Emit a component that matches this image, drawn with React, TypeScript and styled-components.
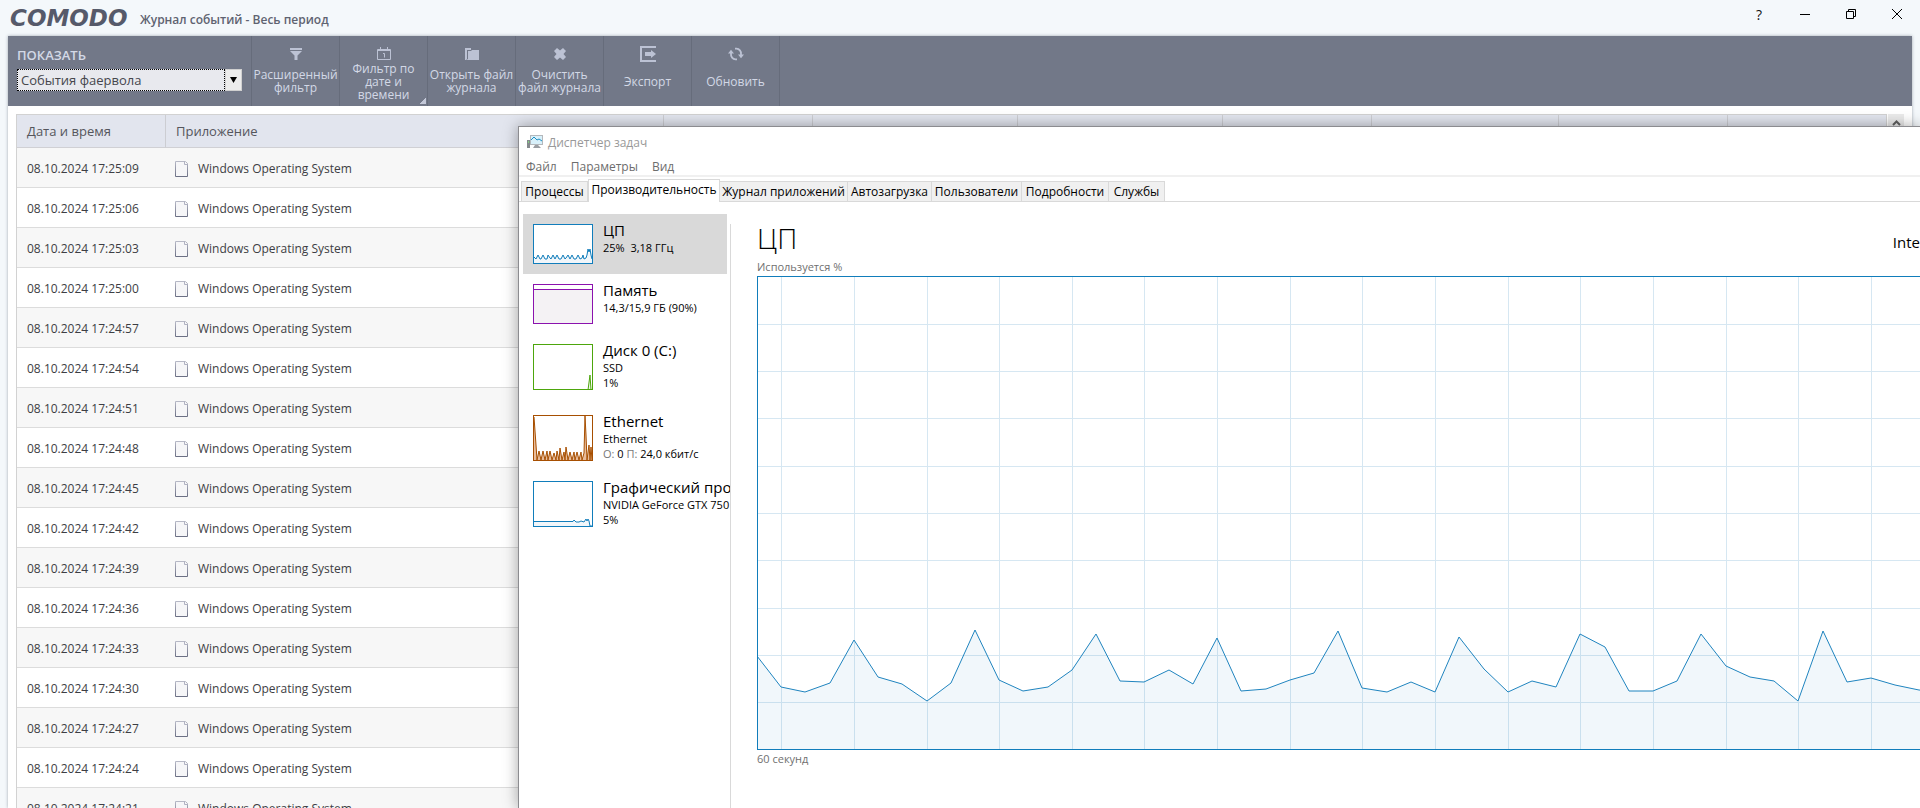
import React from "react";
import styled, { createGlobalStyle } from "styled-components";

const GlobalStyle = createGlobalStyle`
  *, *::before, *::after { box-sizing: border-box; }
  html, body { margin: 0; height: 100%; overflow: hidden; }
  body {
    background: #f4f8fb;
    font-family: "Open Sans", "Noto Sans", sans-serif;
    font-size: 13px;
    color: #3d3e44;
  }
  button, select { font: inherit; color: inherit; margin: 0; }
`;

const Desktop = styled.div`
  position: relative;
  height: 100vh;
  overflow: hidden;
  display: flex;
  flex-direction: column;
`;

/* ---------- Event log window ---------- */

const TitleBar = styled.header`
  flex: none;
  height: 36px;
  display: flex;
  align-items: flex-start;
  padding-left: 10px;
`;

const Brand = styled.span`
  font: italic bold 23px/36px "DejaVu Sans", sans-serif;
  color: #565a6a;
  width: 130px;
`;

const LogTitle = styled.h1`
  flex: 1;
  margin: 0;
  font-size: 12px;
  font-weight: 600;
  line-height: 40px;
  color: #5f6371;
`;

const CaptionButton = styled.button`
  width: 46px;
  height: 28px;
  border: 0;
  padding: 0;
  background: none;
  color: #111;
  display: grid;
  place-items: center;
  font-size: 14px;
`;

const LogPanel = styled.main`
  flex: 1;
  min-height: 0;
  margin: 0 8px;
  background: #fff;
  box-shadow: 0 0 3px rgba(60, 70, 90, 0.45);
  display: flex;
  flex-direction: column;
`;

const Toolbar = styled.div`
  flex: none;
  height: 70px;
  background: #727888;
  color: #d3d8e6;
  display: flex;
`;

const ShowField = styled.div`
  width: 244px;
  padding: 9px 9px 0;
  border-right: 1px solid #666c7b;
`;

const ShowLabel = styled.label`
  display: block;
  font-weight: 600;
  line-height: 20px;
  margin-bottom: 4px;
`;

const Picker = styled.div`
  display: grid;
  grid-template-columns: 1fr 17px;
`;

const PickerSelect = styled.select`
  appearance: none;
  height: 22px;
  padding: 0 3px;
  border: 1px dotted #000;
  border-radius: 0;
  background: #e8e9ee;
  color: #45464c;
  font-size: 13px;
  line-height: 20px;
  outline: 0;
`;

const PickerArrow = styled.span`
  border: 1px solid #d0d0d0;
  background: #ececec;
  display: grid;
  place-items: center;
`;

const ToolButton = styled.button<{ $menu?: boolean }>`
  width: 88px;
  height: 70px;
  padding: 10px 0 6px;
  border: 0;
  border-right: 1px solid #666c7b;
  background: ${(p) =>
    p.$menu
      ? "linear-gradient(135deg, transparent 50%, #c3c8d8 50%) no-repeat right 1px bottom 2px / 6px 6px"
      : "none"};
  display: flex;
  flex-direction: column;
  align-items: center;
  font-size: 12px;
  line-height: 13px;
`;

const ToolIcon = styled.svg`
  flex: none;
  width: 16px;
  height: 16px;
  color: #bcc2d4;
`;

const ToolLabel = styled.span`
  flex: 1;
  display: flex;
  align-items: center;
  text-align: center;
  white-space: pre;
`;

const LogBody = styled.div`
  flex: 1;
  min-height: 0;
  padding: 8px 8px 0;
  display: flex;
  gap: 1px;
  overflow: hidden;
`;

const TableFrame = styled.div`
  flex: 1;
  min-width: 0;
  border: 1px solid #d2d2d2;
  border-bottom: 0;
  overflow: hidden;
`;

const LogTable = styled.table`
  width: 100%;
  table-layout: fixed;
  border-collapse: separate;
  border-spacing: 0;
`;

const HeadCell = styled.th`
  height: 33px;
  padding: 0 10px;
  background: #e2e5ee;
  border-right: 1px solid #cccdd2;
  border-bottom: 1px solid #d0d0d4;
  font-weight: 400;
  text-align: left;
  color: #55565c;
  &:last-child { border-right: 0; }
`;

const LogRow = styled.tr`
  background: #fff;
  &:nth-child(odd) { background: #f7f7f7; }
`;

const Cell = styled.td`
  height: 40px;
  padding: 2px 10px 0;
  border-bottom: 1px solid #dcdcdc;
  font-size: 12px;
  & + & { padding-left: 9px; }
`;

const AppName = styled.span`
  display: flex;
  align-items: center;
  gap: 10px;
`;

const ScrollBar = styled.div`
  width: 16px;
  background: #f0f0f0;
`;

const ScrollUp = styled.button`
  width: 16px;
  height: 17px;
  border: 0;
  padding: 0;
  background: #ebebeb;
  color: #606060;
  display: grid;
  place-items: center;
`;

/* ---------- Task manager window ---------- */

const TaskWindow = styled.section`
  position: absolute;
  left: 518px;
  top: 126px;
  right: 0;
  bottom: 0;
  background: #fff;
  border-left: 1px solid #8c8c90;
  border-top: 1px solid #8c8c90;
  box-shadow: 0 0 14px rgba(0, 0, 0, 0.35);
  color: #000;
  font-size: 12px;
  display: flex;
  flex-direction: column;
  overflow: hidden;
`;

const TaskTitle = styled.h2`
  margin: 0;
  height: 30px;
  padding-left: 8px;
  display: flex;
  align-items: center;
  gap: 5px;
  font-size: 12px;
  font-weight: 400;
  color: #999;
`;

const MenuBar = styled.nav`
  height: 20px;
  padding-left: 7px;
  display: flex;
  gap: 14px;
  border-bottom: 2px solid #f0f0f0;
`;

const MenuItem = styled.button`
  border: 0;
  padding: 2px 0 0;
  background: none;
  color: #6d6d6d;
  line-height: 16px;
`;

const TabList = styled.div`
  height: 25px;
  padding-left: 2px;
  display: flex;
  align-items: flex-end;
  border-bottom: 1px solid #d9d9d9;
`;

const Tab = styled.button<{ $width: number; $active?: boolean }>`
  width: ${(p) => p.$width}px;
  height: ${(p) => (p.$active ? 23 : 20)}px;
  margin-bottom: ${(p) => (p.$active ? -1 : 0)}px;
  padding: 0 0 ${(p) => (p.$active ? 4 : 0)}px;
  border: 1px solid #d9d9d9;
  border-bottom: 0;
  border-left-width: ${(p) => (p.$active ? 1 : 0)}px;
  background: ${(p) => (p.$active ? "#fff" : "#f0f0f0")};
  color: #000;
  white-space: nowrap;
  &:first-child { border-left-width: 1px; }
`;

const TaskBody = styled.div`
  flex: 1;
  min-height: 0;
  display: flex;
`;

const ResourceList = styled.ul`
  list-style: none;
  flex: none;
  width: 211px;
  margin: 0;
  padding: 12px 0 0 4px;
  overflow: hidden;
`;

const Resource = styled.li<{ $selected?: boolean; $height: number }>`
  width: 204px;
  height: ${(p) => p.$height}px;
  padding: 10px 0 0 10px;
  background: ${(p) => (p.$selected ? "#d9d9d9" : "transparent")};
  display: flex;
  align-items: flex-start;
  gap: 10px;
  white-space: pre;
`;

const ResourceText = styled.div`
  line-height: 15px;
  margin-top: -3px;
`;

const ResourceName = styled.div`
  font-size: 15px;
  line-height: 18px;
  margin-bottom: 1px;
`;

const ResourceInfo = styled.div`
  font-size: 11px;
`;

const Muted = styled.span`
  color: #777;
`;

const Details = styled.div`
  flex: 1;
  min-width: 0;
  margin-top: 22px;
  padding-left: 26px;
  border-left: 1px solid #d9d9d9;
  overflow: hidden;
`;

const DetailsHead = styled.div`
  display: flex;
  justify-content: space-between;
  height: 34px;
`;

const DetailsTitle = styled.h3`
  margin: 0;
  font-size: 28px;
  font-weight: 300;
  line-height: 28px;
`;

const Processor = styled.span`
  font-size: 15px;
  line-height: 36px;
`;

const Caption = styled.div`
  height: 18px;
  font-size: 11px;
  line-height: 18px;
  color: #707070;
`;

const ChartSvg = styled.svg`
  display: block;
`;

/* ---------- Data ---------- */

const columnWidths = [149, 498, 149, 205, 205, 149, 187, 169];

const times = [
  "17:25:09", "17:25:06", "17:25:03", "17:25:00", "17:24:57", "17:24:54",
  "17:24:51", "17:24:48", "17:24:45", "17:24:42", "17:24:39", "17:24:36",
  "17:24:33", "17:24:30", "17:24:27", "17:24:24", "17:24:21",
];

const tabs = [
  { label: "Процессы", width: 67 },
  { label: "Производительность", width: 132, active: true },
  { label: "Журнал приложений", width: 128 },
  { label: "Автозагрузка", width: 84 },
  { label: "Пользователи", width: 90 },
  { label: "Подробности", width: 87 },
  { label: "Службы", width: 56 },
];

const CHART_W = 1453;
const CHART_H = 473;
const load = [
  380, 411, 416, 407, 364, 401, 408, 425, 407, 354, 404, 415, 411, 394, 358,
  405, 406, 394, 408, 362, 415, 413, 404, 397, 355, 412, 416, 406, 416, 361,
  393, 416, 405, 411, 358, 371, 415, 415, 405, 358, 390, 401, 405, 425, 355,
  406, 402, 409, 414, 416, 404, 398, 402, 398, 380, 398, 402, 404, 410, 406, 410,
];

/* ---------- Drawings ---------- */

const FunnelIcon = () => (
  <ToolIcon viewBox="0 0 16 16" fill="currentColor">
    <path d="M2 2h12v2H2zM2 5h12l-4.500 4.500V14h-3V9.500z" />
  </ToolIcon>
);
const CalendarIcon = () => (
  <ToolIcon viewBox="0 0 16 16" fill="none" stroke="currentColor">
    <path d="M1.500 3.500h13v10h-13zM4.500 1v3M11.500 1v3M2 4.500h12M7 7.500h1.500v4" />
  </ToolIcon>
);
const FolderIcon = () => (
  <ToolIcon viewBox="0 0 16 16" fill="currentColor">
    <path d="M1 2h6v2H3v9l-1 1H1z" />
    <path d="M4 5h3l1-1h7v10H2l2-1z" />
  </ToolIcon>
);
const ClearIcon = () => (
  <ToolIcon viewBox="0 0 16 16" fill="currentColor">
    <path d="M2 5l3-3 3 2.500L11 2l3 3-2.500 3L14 11l-3 3-3-2.500L5 14l-3-3 2.500-3z" />
  </ToolIcon>
);
const ExportIcon = () => (
  <ToolIcon viewBox="0 0 16 16" fill="currentColor">
    <path d="M0 0h16v2H2v12h14v2H0z" />
    <path d="M5 6h6V4l5 4-5 4v-2H5z" />
  </ToolIcon>
);
const RefreshIcon = () => (
  <ToolIcon viewBox="0 0 16 16" fill="none" stroke="currentColor" strokeWidth="1.8">
    <path d="M7 2.600h1.500A4.800 4.800 0 0 1 13 8v1M9 13.400H7.500A4.800 4.800 0 0 1 3 8V7" />
    <path d="M10 8.500h6l-3 3.800zM0 7.500h6L3 3.700z" fill="currentColor" stroke="none" />
  </ToolIcon>
);

const FileIcon = () => (
  <svg width="13" height="16" viewBox="0 0 13 16" fill="none">
    <defs>
      <linearGradient id="sheet" x1="0" y1="0" x2="0" y2="1">
        <stop offset="0" stopColor="#b6b8c6" />
        <stop offset="1" stopColor="#6c7085" />
      </linearGradient>
    </defs>
    <path d="M.5.500h10l2 2v13H.500z" fill="#f6f6f8" stroke="url(#sheet)" />
    <path d="M9.500.500v3h3" stroke="#b0b2c2" />
  </svg>
);

const TaskIcon = () => (
  <svg width="16" height="16" viewBox="0 0 16 16">
    <path d="M0 6h3v8H0z" fill="#85898d" />
    <path d="M1 7h1v2H1z" fill="#7fd07f" />
    <path d="M3 1h13v10H3z" fill="#b4b8bc" />
    <path d="M4 2h11v8H4z" fill="#d8f0fa" />
    <path d="M4 6l3-3 3 3 2-1 3 2" fill="none" stroke="#1b8fc4" />
    <path d="M8 11h3l3 3H6z" fill="#9a9ea3" />
  </svg>
);

const ThumbSvg = styled.svg`
  flex: none;
`;

const Thumb = ({
  height, color, fill = "none", line,
}: { height: number; color: string; fill?: string; line: string }) => (
  <ThumbSvg width="60" height={height} viewBox={`0 0 60 ${height}`}>
    <rect x=".5" y=".5" width="59" height={height - 1} fill="#fff" />
    <path d={`M1 ${height - 1}L${line}L59 ${height - 1}z`} fill={fill} />
    <path d={`M${line}`} fill="none" stroke={color} />
    <rect x=".5" y=".5" width="59" height={height - 1} fill="none" stroke={color} />
  </ThumbSvg>
);

const cpuLine =
  "1 33 3 35 5 31 7 35 8 35 10 31 12 35 14 35 15 31 17 34 18 35 20 31 22 35 24 31 26 35 28 35 30 31 32 35 33 34 35 31 37 35 39 31 41 35 43 35 45 31 47 35 49 34 50 31 51 35 53 34 54 31 55 25 56 28 57 25 58 31 59 35";
const diskLine = "1 46 55 46 57 31 58 46";
const netLine =
  "1 2 3 30 4 45 6 36 8 45 10 36 12 45 14 36 15 45 17 36 19 45 21 38 23 45 24 36 26 45 27 33 29 45 31 37 32 45 33 32 35 45 37 37 39 45 41 37 42 45 44 37 46 45 48 37 49 45 51 38 52 1 53 20 54 45 56 30 57 45 58 32 59 45";
const gpuLine = "1 40.500 40 40.500 41 39 43 41 46 41 48 40 51 41 53 38 54 40 55 38 56 40 57 45 59 45";

const CpuChart = () => {
  const step = CHART_W / 60;
  const points = load.map((y, i) => `${Math.round(i * step)},${y}`).join(" ");
  return (
    <ChartSvg width={CHART_W} height={CHART_H + 1} viewBox={`0 0 ${CHART_W} ${CHART_H + 1}`}>
      <g stroke="#d6e7f2" shapeRendering="crispEdges">
        {Array.from({ length: 9 }, (_, i) => {
          const y = Math.ceil(((i + 1) * CHART_H) / 10) + 0.5;
          return <line key={i} x1="0" x2={CHART_W} y1={y} y2={y} />;
        })}
        {Array.from({ length: 20 }, (_, i) => {
          const x = Math.round((1 + i * 3) * step) + 0.5;
          return <line key={i} x1={x} x2={x} y1="0" y2={CHART_H} />;
        })}
      </g>
      <polygon points={`0,${CHART_H} ${points} ${CHART_W},${CHART_H}`} fill="#117dbb" fillOpacity=".06" />
      <polyline points={points} fill="none" stroke="#1f84bf" />
      <rect x=".5" y=".5" width={CHART_W - 1} height={CHART_H} fill="none" stroke="#117dbb" />
    </ChartSvg>
  );
};

const tools = [
  { label: "Расширенный\nфильтр", icon: <FunnelIcon /> },
  { label: "Фильтр по\nдате и\nвремени", icon: <CalendarIcon />, menu: true },
  { label: "Открыть файл\nжурнала", icon: <FolderIcon /> },
  { label: "Очистить\nфайл журнала", icon: <ClearIcon /> },
  { label: "Экспорт", icon: <ExportIcon /> },
  { label: "Обновить", icon: <RefreshIcon /> },
];

const resources = [
  {
    name: "ЦП", height: 60, selected: true, info: ["25%  3,18 ГГц"],
    thumb: <Thumb height={40} color="#117dbb" fill="#f1f6fa" line={cpuLine} />,
  },
  {
    name: "Память", height: 60, info: ["14,3/15,9 ГБ (90%)"],
    thumb: <Thumb height={40} color="#8b12ae" fill="#f4f2f4" line="1 5.500 59 5.500" />,
  },
  {
    name: "Диск 0 (C:)", height: 71, info: ["SSD", "1%"],
    thumb: <Thumb height={46} color="#4da60c" fill="#eff7e9" line={diskLine} />,
  },
  {
    name: "Ethernet", height: 66,
    info: ["Ethernet", <><Muted>О:</Muted> 0 <Muted>П:</Muted> 24,0 кбит/с</>],
    thumb: <Thumb height={46} color="#a74f01" fill="#e9bd9d" line={netLine} />,
  },
  {
    name: "Графический про", height: 66, info: ["NVIDIA GeForce GTX 750", "5%"],
    thumb: <Thumb height={46} color="#117dbb" fill="#f1f6fa" line={gpuLine} />,
  },
];

/* ---------- Page ---------- */

export default function App() {
  return (
    <>
      <GlobalStyle />
      <Desktop>
        <TitleBar>
          <Brand>COMODO</Brand>
          <LogTitle>Журнал событий - Весь период</LogTitle>
          <CaptionButton aria-label="Справка">?</CaptionButton>
          <CaptionButton aria-label="Свернуть">
            <svg width="10" height="10"><path d="M0 5.500h10" stroke="#000" /></svg>
          </CaptionButton>
          <CaptionButton aria-label="Восстановить">
            <svg width="10" height="10" fill="none" stroke="#000">
              <path d="M.5 2.500h7v7h-7zM2.500 2.500v-2h7v7h-2" />
            </svg>
          </CaptionButton>
          <CaptionButton aria-label="Закрыть">
            <svg width="10" height="10" stroke="#000"><path d="M0 0l10 10M10 0L0 10" /></svg>
          </CaptionButton>
        </TitleBar>

        <LogPanel>
          <Toolbar>
            <ShowField>
              <ShowLabel htmlFor="show">ПОКАЗАТЬ</ShowLabel>
              <Picker>
                <PickerSelect id="show">
                  <option>События фаервола</option>
                </PickerSelect>
                <PickerArrow>
                  <svg width="7" height="6"><path d="M0 0h7L3.500 6z" /></svg>
                </PickerArrow>
              </Picker>
            </ShowField>
            {tools.map((t) => (
              <ToolButton key={t.label} $menu={t.menu}>
                {t.icon}
                <ToolLabel>{t.label}</ToolLabel>
              </ToolButton>
            ))}
          </Toolbar>

          <LogBody>
            <TableFrame>
              <LogTable>
                <colgroup>
                  {columnWidths.map((w, i) => <col key={i} width={w} />)}
                  <col />
                </colgroup>
                <thead>
                  <tr>
                    <HeadCell>Дата и время</HeadCell>
                    <HeadCell>Приложение</HeadCell>
                    <HeadCell>Действие</HeadCell>
                    <HeadCell /><HeadCell /><HeadCell /><HeadCell /><HeadCell /><HeadCell />
                  </tr>
                </thead>
                <tbody>
                  {times.map((t) => (
                    <LogRow key={t}>
                      <Cell>08.10.2024 {t}</Cell>
                      <Cell><AppName><FileIcon />Windows Operating System</AppName></Cell>
                      <Cell colSpan={7} />
                    </LogRow>
                  ))}
                </tbody>
              </LogTable>
            </TableFrame>
            <ScrollBar>
              <ScrollUp aria-label="Прокрутить вверх">
                <svg width="9" height="6" fill="none" stroke="currentColor" strokeWidth="2">
                  <path d="M1 5l3.500-3.500L8 5" />
                </svg>
              </ScrollUp>
            </ScrollBar>
          </LogBody>
        </LogPanel>

        <TaskWindow>
          <TaskTitle><TaskIcon />Диспетчер задач</TaskTitle>
          <MenuBar>
            <MenuItem>Файл</MenuItem>
            <MenuItem>Параметры</MenuItem>
            <MenuItem>Вид</MenuItem>
          </MenuBar>
          <TabList role="tablist">
            {tabs.map((t) => (
              <Tab key={t.label} role="tab" aria-selected={!!t.active} $width={t.width} $active={t.active}>
                {t.label}
              </Tab>
            ))}
          </TabList>
          <TaskBody>
            <ResourceList>
              {resources.map((r) => (
                <Resource key={r.name} $height={r.height} $selected={r.selected}>
                  {r.thumb}
                  <ResourceText>
                    <ResourceName>{r.name}</ResourceName>
                    {r.info.map((line, i) => <ResourceInfo key={i}>{line}</ResourceInfo>)}
                  </ResourceText>
                </Resource>
              ))}
            </ResourceList>
            <Details>
              <DetailsHead>
                <DetailsTitle>ЦП</DetailsTitle>
                <Processor>Inte</Processor>
              </DetailsHead>
              <Caption>Используется %</Caption>
              <CpuChart />
              <Caption>60 секунд</Caption>
            </Details>
          </TaskBody>
        </TaskWindow>
      </Desktop>
    </>
  );
}
